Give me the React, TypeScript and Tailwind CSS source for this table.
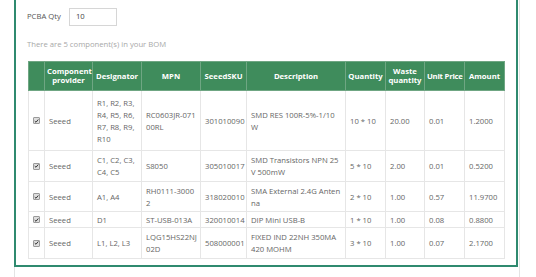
import React from "react";

interface BomRow {
  designator: string[];
  mpn: string[];
  sku: string;
  description: string[];
  quantity: string;
  waste: string;
  unitPrice: string;
  amount: string;
  height: string;
}

const rows: BomRow[] = [
  {
    designator: ["R1, R2, R3,", "R4, R5, R6,", "R7, R8, R9,", "R10"],
    mpn: ["RC0603JR-071", "00RL"],
    sku: "301010090",
    description: ["SMD RES 100R-5%-1/10", "W"],
    quantity: "10 * 10",
    waste: "20.00",
    unitPrice: "0.01",
    amount: "1.2000",
    height: "h-[60px]",
  },
  {
    designator: ["C1, C2, C3,", "C4, C5"],
    mpn: ["S8050"],
    sku: "305010017",
    description: ["SMD Transistors NPN 25", "V 500mW"],
    quantity: "5 * 10",
    waste: "2.00",
    unitPrice: "0.01",
    amount: "0.5200",
    height: "h-[31px]",
  },
  {
    designator: ["A1, A4"],
    mpn: ["RH0111-3000", "2"],
    sku: "318020010",
    description: ["SMA External 2.4G Anten", "na"],
    quantity: "2 * 10",
    waste: "1.00",
    unitPrice: "0.57",
    amount: "11.9700",
    height: "h-[30px]",
  },
  {
    designator: ["D1"],
    mpn: ["ST-USB-013A"],
    sku: "320010014",
    description: ["DIP Mini USB-B"],
    quantity: "1 * 10",
    waste: "1.00",
    unitPrice: "0.08",
    amount: "0.8800",
    height: "h-[16px]",
  },
  {
    designator: ["L1, L2, L3"],
    mpn: ["LQG15HS22NJ", "02D"],
    sku: "508000001",
    description: ["FIXED IND 22NH 350MA", "420 MOHM"],
    quantity: "3 * 10",
    waste: "1.00",
    unitPrice: "0.07",
    amount: "2.1700",
    height: "h-[31px]",
  },
];

const Lines = ({ lines }: { lines: string[] }) => (
  <>
    {lines.map((l, i) => (
      <div key={i}>{l}</div>
    ))}
  </>
);

const Check = () => (
  <span className="flex w-[7px] h-[7px] items-center justify-center border border-[#9a9a9a] bg-[#dedede] rounded-[1px] mx-auto">
    <svg viewBox="0 0 8 8" className="w-[6px] h-[6px]">
      <path d="M1.2 4.2 L3.2 6 L6.8 1.6" fill="none" stroke="#333" strokeWidth="1.6" />
    </svg>
  </span>
);

const th = "border border-[#6fa683] px-[2px] font-bold text-white text-center align-middle";
const td = "border border-[#e6e6e6] px-[4px] py-0 align-middle whitespace-nowrap";

const App = () => {
  return (
    <div className="w-[536px] h-[277px] bg-white overflow-hidden font-['Open_Sans',sans-serif]">
      <div className="ml-[14px] w-[506px] h-[277px] border-x border-[#e4e4e4]">
        <div className="w-[504px] -ml-px border-x-2 border-b-2 border-[#2f8a6f] pl-[11px] pr-[12px] pt-[8px] pb-[6px]">
          <div className="flex items-center gap-[8px] text-[7.7px] text-[#555]">
            <span>PCBA Qty</span>
            <div className="w-[48px] h-[18px] border border-[#d6d6d6] flex items-center px-[6px] text-[#444]">10</div>
          </div>
          <p className="mt-[12px] text-[7.7px] leading-[12px] text-[#a8a8a8]">There are 5 component(s) in your BOM</p>
          <table className="mt-[11px] ml-px w-[476px] table-fixed border-collapse text-[7.7px] leading-[12px]">
            <colgroup>
              <col className="w-[16px]" />
              <col className="w-[48px]" />
              <col className="w-[49px]" />
              <col className="w-[59px]" />
              <col className="w-[46px]" />
              <col className="w-[99px]" />
              <col className="w-[40px]" />
              <col className="w-[39px]" />
              <col className="w-[40px]" />
              <col className="w-[40px]" />
            </colgroup>
            <thead>
              <tr className="h-[29px] bg-[#3f8c5c] leading-[9px]">
                <th className={th}></th>
                <th className={th}>Component<br />provider</th>
                <th className={th}>Designator</th>
                <th className={th}>MPN</th>
                <th className={th}>SeeedSKU</th>
                <th className={th}>Description</th>
                <th className={th}>Quantity</th>
                <th className={th}>Waste<br />quantity</th>
                <th className={`${th} whitespace-nowrap tracking-[-0.2px]`}>Unit Price</th>
                <th className={th}>Amount</th>
              </tr>
            </thead>
            <tbody className="text-[#666]">
              {rows.map((r, i) => (
                <tr key={i} className={r.height}>
                  <td className={`${td} px-0`}><Check /></td>
                  <td className={td}>Seeed</td>
                  <td className={td}><Lines lines={r.designator} /></td>
                  <td className={td}><Lines lines={r.mpn} /></td>
                  <td className={td}>{r.sku}</td>
                  <td className={td}><Lines lines={r.description} /></td>
                  <td className={td}>{r.quantity}</td>
                  <td className={td}>{r.waste}</td>
                  <td className={td}>{r.unitPrice}</td>
                  <td className={td}>{r.amount}</td>
                </tr>
              ))}
            </tbody>
          </table>
        </div>
      </div>
    </div>
  );
};

export default App;
